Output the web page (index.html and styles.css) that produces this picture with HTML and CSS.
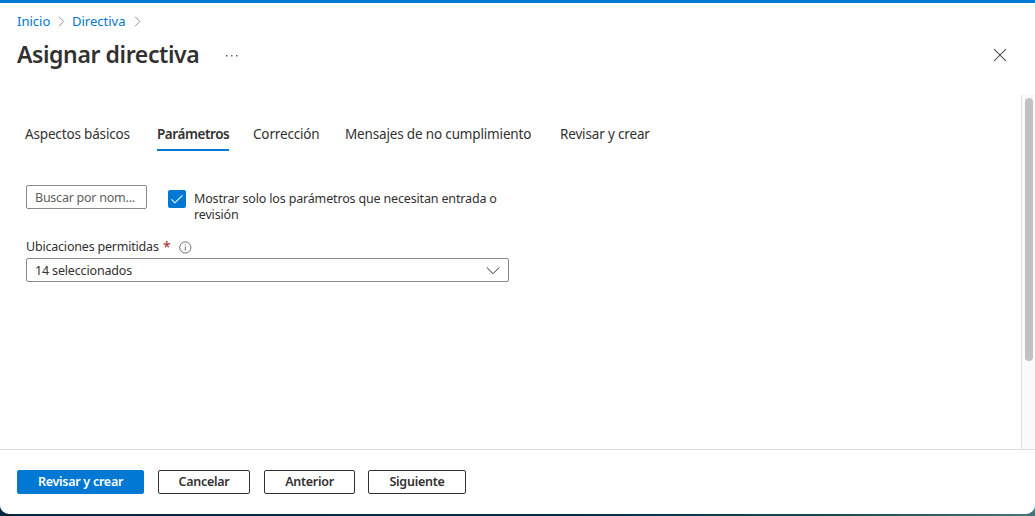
FILE: index.html
```html
<!DOCTYPE html>
<html lang="es">
<head>
<meta charset="utf-8">
<title>Asignar directiva</title>
<link rel="stylesheet" href="styles.css">
</head>
<body>
<div class="window">
  <header class="header">
    <nav class="breadcrumb">
      <a class="crumb crumb-home">Inicio</a>
      <svg class="crumb-sep" width="7" height="12" viewBox="0 0 7 12"><path d="M1 1.7 5.7 6.5 1 11.3"/></svg>
      <a class="crumb crumb-policy">Directiva</a>
      <svg class="crumb-sep" width="7" height="12" viewBox="0 0 7 12"><path d="M1 1.7 5.7 6.5 1 11.3"/></svg>
    </nav>
    <div class="title-row">
      <h1 class="title">Asignar directiva</h1>
      <svg class="more" width="14" height="4" viewBox="0 0 14 4"><path d="M1 1h1.5v1.5H1zM6 1h1.5v1.5H6zM11 1h1.5v1.5H11z"/></svg>
      <svg class="close" width="14" height="14" viewBox="0 0 14 14"><path d="m1 1 12 12M13 1 1 13"/></svg>
    </div>
  </header>
  <main class="body">
    <div class="content">
      <nav class="tabs">
        <span class="tab tab-basics">Aspectos básicos</span>
        <span class="tab tab-params active">Parámetros</span>
        <span class="tab tab-fix">Corrección</span>
        <span class="tab tab-messages">Mensajes de no cumplimiento</span>
        <span class="tab tab-review">Revisar y crear</span>
      </nav>
      <div class="filters">
        <div class="search"><span class="search-text">Buscar por nom...</span></div>
        <span class="checkbox"><svg width="18" height="18" viewBox="0 0 18 18"><path d="m3.4 9.3 3.5 3.5 7.5-7.4"/></svg></span>
        <span class="check-label">Mostrar solo los parámetros que necesitan entrada o<br>revisión</span>
      </div>
      <div class="field-label">
        <span class="label-text">Ubicaciones permitidas</span>
        <span class="required">*</span>
        <svg class="info" width="13" height="13" viewBox="0 0 13 13"><circle cx="6.3" cy="6.5" r="5.6"/><path d="M6.3 5.7v4M6.3 3.3v1.2"/></svg>
      </div>
      <div class="select">
        <span class="select-text">14 seleccionados</span>
        <svg class="chevron" width="14" height="9" viewBox="0 0 14 9"><path d="m.8 1.5 6.2 6.2 6.2-6.2"/></svg>
      </div>
    </div>
    <div class="scrollbar"><div class="thumb"></div></div>
  </main>
  <footer class="footer">
    <button class="btn primary">Revisar y crear</button>
    <button class="btn cancel">Cancelar</button>
    <button class="btn previous">Anterior</button>
    <button class="btn next">Siguiente</button>
  </footer>
</div>
</body>
</html>
```
FILE: styles.css
```css
* { box-sizing: border-box; }
body {
  margin: 0;
  height: 516px;
  overflow: hidden;
  background: linear-gradient(90deg, #06263f 0%, #052c45 55%, #1c4652 80%, #47737c 100%);
  color: #323130;
  font: 12.5px/16px "Noto Sans", "Open Sans", sans-serif;
  letter-spacing: -0.16px;
}
svg { display: block; fill: none; flex: none; }
.window {
  display: flex;
  flex-direction: column;
  height: 514px;
  background: #fff;
  border-top: 3px solid #0078d4;
  border-radius: 0 0 9px 9px;
  overflow: hidden;
}
.header { height: 92px; padding: 9px 28px 0 17px; flex: none; }
.breadcrumb { display: flex; align-items: center; height: 18px; }
.crumb { color: #0078d4; font-size: 13px; line-height: 18px; letter-spacing: 0; white-space: nowrap; }
.crumb-home { width: 41px; }
.crumb-policy { width: 62px; margin-left: 7px; }
.crumb-sep { stroke: #8a8886; stroke-width: 0.9; }
.title-row { display: flex; align-items: center; height: 32px; margin-top: 8px; }
.title {
  margin: 0;
  width: 208px;
  font-size: 23px;
  line-height: 32px;
  font-weight: 600;
  letter-spacing: -0.4px;
  white-space: nowrap;
}
.more { fill: #605e5c; margin-top: 4px; }
.close { margin: 2px 0 0 auto; stroke: #323130; stroke-width: 1.05; }
.body { display: flex; height: 354px; flex: none; }
.content { flex: 1; padding: 28px 0 0 25px; }
.tabs { display: flex; height: 28px; font-size: 13.5px; line-height: 22px; }
.tab { white-space: nowrap; flex: none; }
.tab-basics { width: 104px; margin-right: 28px; }
.tab-params { width: 72px; margin-right: 24px; }
.tab-fix { width: 67px; margin-right: 25px; }
.tab-messages { width: 186px; margin-right: 29px; }
.active { font-weight: 600; letter-spacing: -0.43px; border-bottom: 2px solid #0078d4; }
.filters { display: flex; margin-top: 34px; padding-left: 1px; height: 54px; }
.search {
  width: 121px;
  height: 24px;
  padding: 1px 8px 0;
  border: 1px solid #8a8886;
  border-radius: 2px;
  color: #605e5c;
  line-height: 22px;
  letter-spacing: -0.24px;
  white-space: nowrap;
}
.checkbox { width: 18px; height: 18px; margin: 5px 8px 0 21px; background: #0078d4; border-radius: 2px; }
.checkbox path { stroke: #fff; stroke-width: 1.1; }
.check-label { padding-top: 6px; white-space: nowrap; }
.field-label { display: flex; height: 16px; margin: 0 0 3px 1px; align-items: center; }
.label-text { width: 137px; letter-spacing: -0.2px; white-space: nowrap; }
.required { width: 16px; color: #a4262c; font-size: 14px; }
.info { stroke: #605e5c; stroke-width: 0.9; }
.select {
  display: flex;
  align-items: center;
  justify-content: space-between;
  width: 483px;
  height: 24px;
  margin-left: 1px;
  padding: 1px 8px 0;
  border: 1px solid #8a8886;
  border-radius: 2px;
}
.chevron { stroke: #323130; stroke-width: 1; }
.scrollbar { width: 14px; padding: 3px 2px 0 3px; background: #fafafa; border-left: 1px solid #e3e3e3; }
.thumb { width: 8px; height: 263px; border-radius: 4px; background: #c1c1c1; }
.footer { display: flex; gap: 14px; flex: 1; padding: 20px 17px; border-top: 1px solid #dcdcdc; }
.btn {
  height: 24px;
  padding: 0;
  background: #fff;
  border: 1px solid #323130;
  border-radius: 2px;
  color: #323130;
  font: 600 12.5px/20px "Noto Sans", "Open Sans", sans-serif;
  letter-spacing: -0.27px;
  white-space: nowrap;
}
.primary { width: 127px; background: #0078d4; border-color: #0078d4; color: #fff; }
.cancel { width: 92px; }
.previous { width: 91px; }
.next { width: 98px; margin-left: -1px; }
```
